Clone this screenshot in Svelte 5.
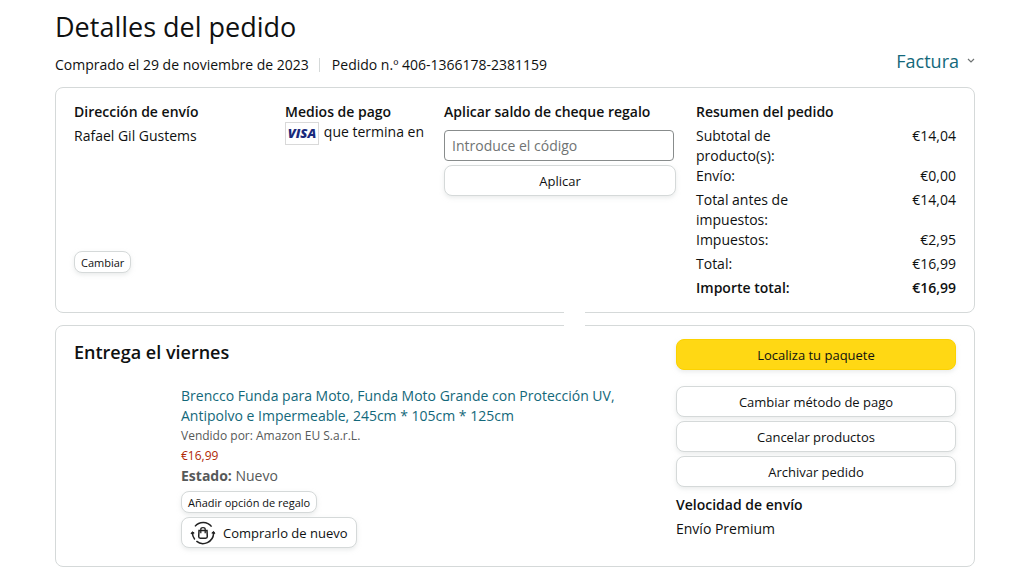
<script lang="ts">
	const summary = [
		{ label: 'Subtotal de producto(s):', value: '€14,04' },
		{ label: 'Envío:', value: '€0,00' },
		{ label: 'Total antes de impuestos:', value: '€14,04', spaced: true },
		{ label: 'Impuestos:', value: '€2,95' },
		{ label: 'Total:', value: '€16,99', spaced: true },
		{ label: 'Importe total:', value: '€16,99', spaced: true, bold: true }
	];

	const actions = ['Cambiar método de pago', 'Cancelar productos', 'Archivar pedido'];

	let code = $state('');
</script>

<main>
	<h1>Detalles del pedido</h1>

	<div class="subheader">
		<div class="meta">
			<span>Comprado el 29 de noviembre de 2023</span>
			<span class="order-number">Pedido n.º 406-1366178-2381159</span>
		</div>
		<a class="invoice" href="#factura">
			Factura
			<svg width="8" height="6" viewBox="0 0 8 6" aria-hidden="true">
				<path d="M1 1l3 3 3-3" fill="none" stroke="#6f7373" stroke-width="1.2" />
			</svg>
		</a>
	</div>

	<section class="card overview">
		<div class="address">
			<h2>Dirección de envío</h2>
			<p>Rafael Gil Gustems</p>
			<button class="small" type="button">Cambiar</button>
		</div>

		<div>
			<h2>Medios de pago</h2>
			<p class="payment"><span class="visa">VISA</span> que termina en</p>
		</div>

		<form class="gift" onsubmit={(e) => e.preventDefault()}>
			<h2><label for="code">Aplicar saldo de cheque regalo</label></h2>
			<input id="code" type="text" placeholder="Introduce el código" bind:value={code} />
			<button type="submit">Aplicar</button>
		</form>

		<div>
			<h2>Resumen del pedido</h2>
			<dl>
				{#each summary as row}
					<div class="row" class:spaced={row.spaced} class:bold={row.bold}>
						<dt>{row.label}</dt>
						<dd>{row.value}</dd>
					</div>
				{/each}
			</dl>
		</div>
	</section>

	<section class="card shipment">
		<div class="delivery">
			<h2 class="status">Entrega el viernes</h2>
			<div class="item">
				<a class="product" href="#producto">
					Brencco Funda para Moto, Funda Moto Grande con Protección UV, Antipolvo e Impermeable, 245cm *
					105cm * 125cm
				</a>
				<p class="seller">Vendido por: Amazon EU S.a.r.L.</p>
				<p class="price">€16,99</p>
				<p class="condition"><b>Estado:</b> Nuevo</p>
				<div class="item-buttons">
					<button class="small" type="button">Añadir opción de regalo</button>
					<button class="again" type="button">
						<svg width="26" height="24" viewBox="0 0 26 24" fill="none" stroke="#222" aria-hidden="true">
							<path d="M5 5.4A10.6 10.6 0 0 1 21.6 5.6" stroke-width="1.5" />
							<path d="M2.4 11.5A10.6 10.6 0 0 0 4.8 18.4" stroke-width="1.5" />
							<path d="M6.4 20.2A10.6 10.6 0 0 0 23.6 12.4V11" stroke-width="1.5" />
							<path d="M1 12.8l1.4-2 1.8 1.2zM21.8 12l1.8-1.6 1.2 2z" fill="#222" stroke-width="1" />
							<path d="M9 9.6h8l.3 6q0 1.6-1.6 1.6h-5.4q-1.6 0-1.6-1.6z" stroke-width="1.5" />
							<path d="M10.8 12.2V8.2q0-1.6 2.2-1.6t2.2 1.6v4" stroke-width="1.3" />
						</svg>
						Comprarlo de nuevo
					</button>
				</div>
			</div>
		</div>

		<div class="actions">
			<button class="primary" type="button">Localiza tu paquete</button>
			{#each actions as action}
				<button type="button">{action}</button>
			{/each}
			<h2>Velocidad de envío</h2>
			<p>Envío Premium</p>
		</div>
	</section>
</main>

<style>
	:global(body) {
		background: #fff;
	}

	main {
		padding: 7px 36px 20px 55px;
		font-family: 'Open Sans', 'Noto Sans', sans-serif;
		font-size: 14px;
		line-height: 20px;
		color: #0f1111;
	}

	h1,
	h2,
	p,
	dl,
	dd {
		margin: 0;
	}

	h1 {
		font-size: 27px;
		font-weight: 400;
		line-height: 40px;
	}

	h2 {
		margin-bottom: 4px;
		font-size: 14px;
		font-weight: 600;
		line-height: 20px;
	}

	a {
		color: #13687a;
		text-decoration: none;
	}

	.subheader {
		display: flex;
		justify-content: space-between;
		height: 40px;
	}

	.meta {
		display: flex;
		align-items: center;
		height: 36px;
	}

	.order-number {
		margin-left: 10px;
		padding-left: 12px;
		border-left: 1px solid #d5d9d9;
		line-height: 14px;
	}

	.invoice {
		display: flex;
		align-items: center;
		gap: 8px;
		height: 28px;
		font-size: 18px;
	}

	.card {
		position: relative;
		display: grid;
		gap: 20px;
		padding: 14px 18px;
		border: 1px solid #d5d9d9;
		border-radius: 8px;
	}

	.overview {
		grid-template-columns: minmax(0, 191fr) minmax(0, 139fr) minmax(0, 232fr) minmax(0, 260fr);
	}

	/* opening in the facing borders of the two cards */
	.overview::after {
		content: '';
		position: absolute;
		top: 100%;
		left: 55.3%;
		width: 21px;
		height: 16px;
		margin-top: -1px;
		background: #fff;
		z-index: 1;
	}

	.shipment {
		grid-template-columns: 582fr 280fr;
		margin-top: 12px;
		padding: 13px 18px 18px;
	}

	.address {
		display: flex;
		flex-direction: column;
		align-items: flex-start;
		padding-bottom: 25px;
	}

	.address button {
		margin-top: auto;
	}

	.payment {
		display: flex;
		gap: 5px;
		margin-top: -4px;
		white-space: nowrap;
	}

	.visa {
		box-sizing: border-box;
		width: 34px;
		height: 23px;
		border: 1px solid #d9d9d9;
		color: #1a2a7c;
		font-size: 13px;
		font-weight: 800;
		font-style: italic;
		line-height: 21px;
		text-align: center;
	}

	button {
		height: 31px;
		padding: 0 8px;
		border: 1px solid #d5d9d9;
		border-radius: 8px;
		background: #fff;
		box-shadow: 0 2px 4px rgba(213, 217, 217, 0.5);
		color: #0f1111;
		font-family: inherit;
		font-size: 13px;
		cursor: pointer;
	}

	button:hover {
		background: #f7fafa;
	}

	button.small {
		height: 22px;
		padding: 0 6px;
		font-size: 11px;
	}

	button.primary {
		margin-bottom: 12px;
		border-color: #fcd200;
		background: #ffd814;
	}

	.gift {
		display: flex;
		flex-direction: column;
		gap: 4px;
	}

	input {
		box-sizing: border-box;
		height: 31px;
		margin-right: 2px;
		padding: 0 7px;
		border: 1px solid #888c8c;
		border-radius: 4px;
		color: #0f1111;
		font-family: inherit;
		font-size: 14px;
	}

	input::placeholder {
		color: #6f7373;
	}

	.row {
		display: flex;
		justify-content: space-between;
	}

	.row dt {
		max-width: 120px;
	}

	.spaced {
		margin-top: 4px;
	}

	.bold {
		font-weight: 600;
	}

	.status {
		margin-bottom: 21px;
		font-size: 18px;
		line-height: 26px;
	}

	.item {
		margin-left: 107px;
	}

	.product {
		display: block;
		max-width: 440px;
	}

	.seller,
	.price {
		font-size: 12px;
		color: #565959;
	}

	.price {
		color: #b12704;
	}

	.condition {
		color: #565959;
	}

	.item-buttons {
		display: flex;
		flex-direction: column;
		align-items: flex-start;
		gap: 4px;
		margin-top: 5px;
	}

	.again {
		display: flex;
		align-items: center;
		gap: 7px;
	}

	.actions {
		display: flex;
		flex-direction: column;
		gap: 4px;
	}

	.actions h2 {
		margin: 4px 0 0;
	}
</style>
